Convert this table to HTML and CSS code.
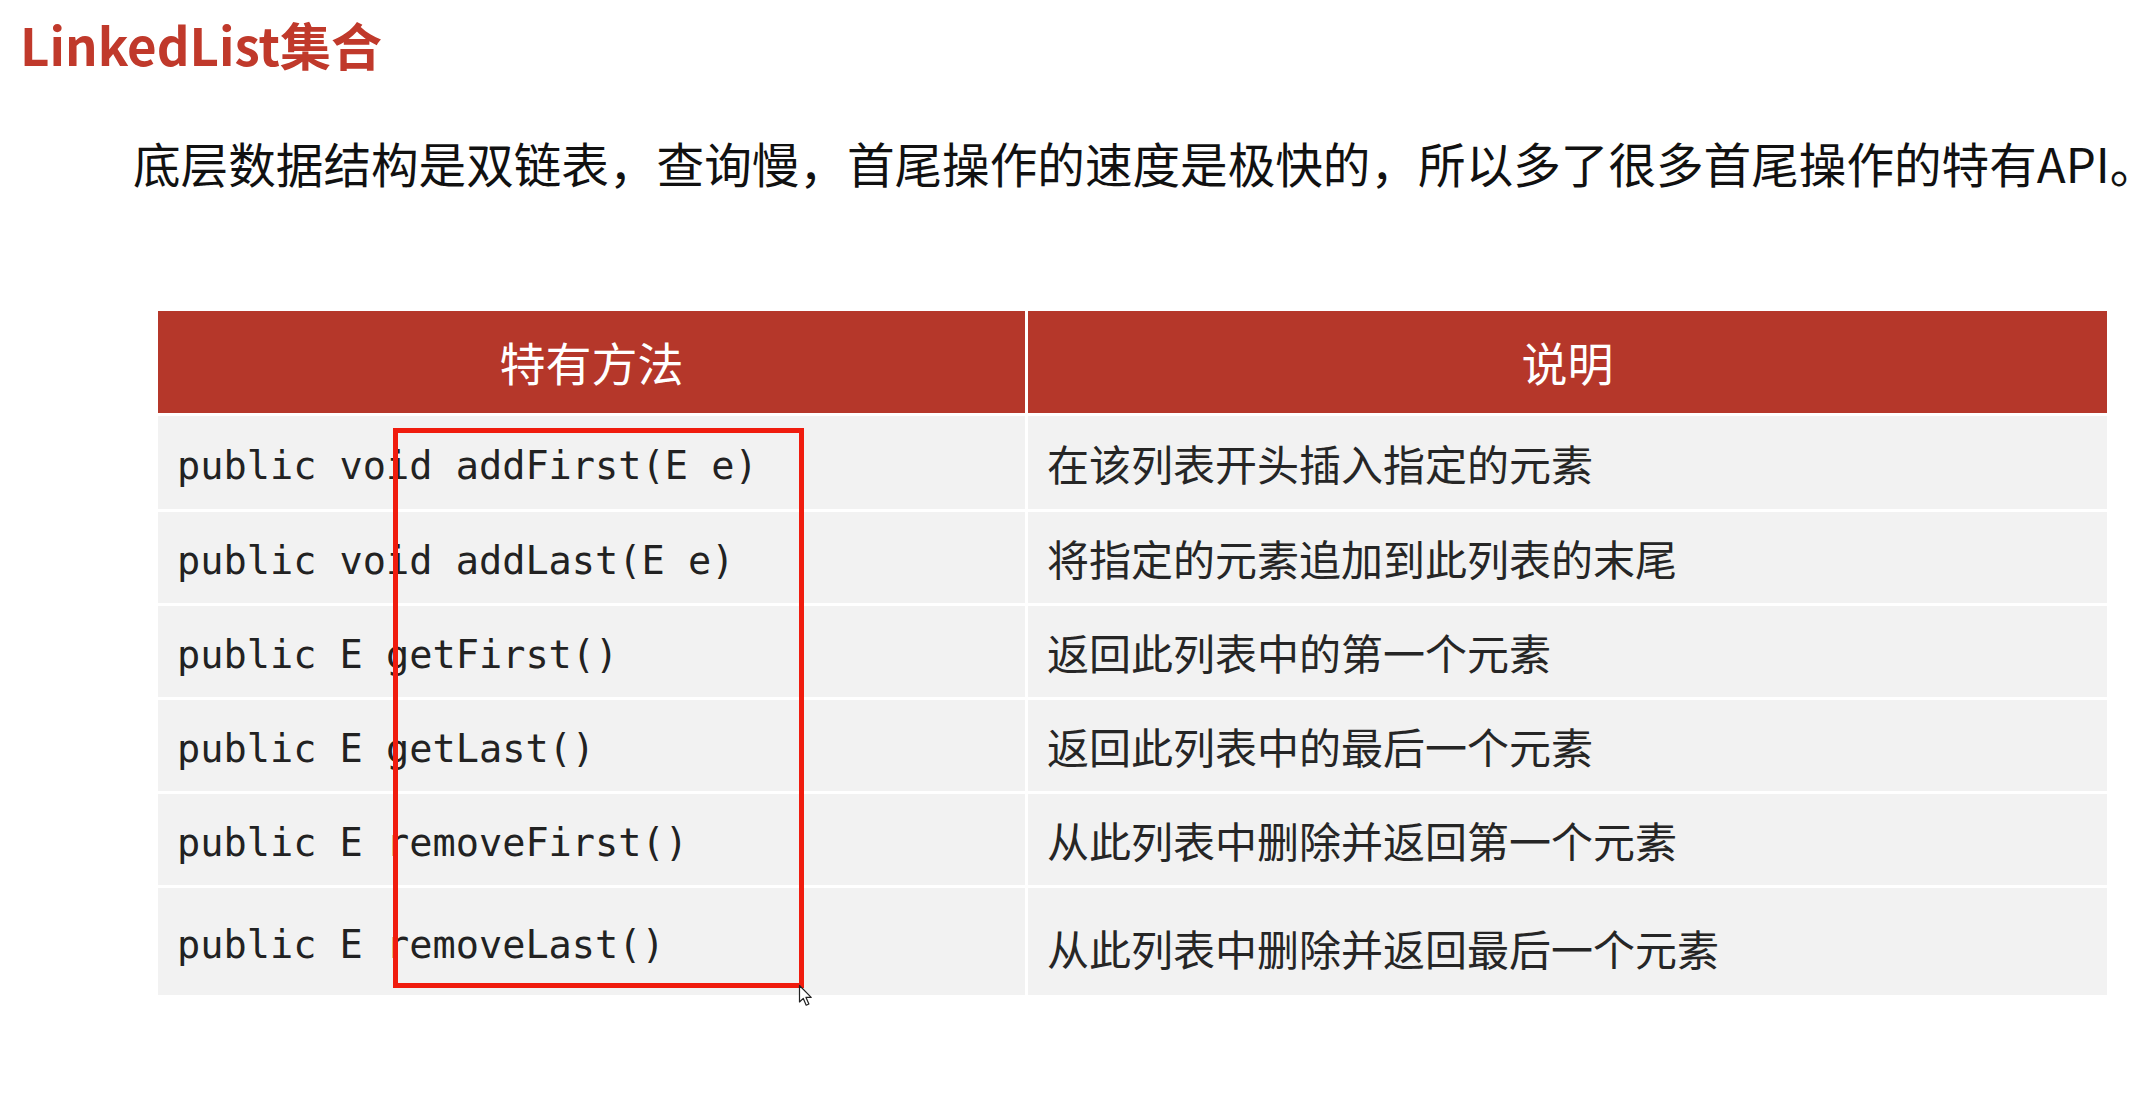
FILE: index.html
```html
<!DOCTYPE html>
<html lang="zh-CN">
<head>
<meta charset="utf-8">
<title>LinkedList集合</title>
<link rel="stylesheet" href="styles.css">
</head>
<body>
<h1 class="title">LinkedList集合</h1>
<p class="intro">底层数据结构是双链表，查询慢，首尾操作的速度是极快的，所以多了很多首尾操作的特有API。</p>
<div class="table">
  <div class="head">特有方法</div>
  <div class="head">说明</div>
  <div class="cell code">public void addFirst(E e)</div>
  <div class="cell desc">在该列表开头插入指定的元素</div>
  <div class="cell code">public void addLast(E e)</div>
  <div class="cell desc">将指定的元素追加到此列表的末尾</div>
  <div class="cell code">public E getFirst()</div>
  <div class="cell desc">返回此列表中的第一个元素</div>
  <div class="cell code">public E getLast()</div>
  <div class="cell desc">返回此列表中的最后一个元素</div>
  <div class="cell code">public E removeFirst()</div>
  <div class="cell desc">从此列表中删除并返回第一个元素</div>
  <div class="cell code">public E removeLast()</div>
  <div class="cell desc last">从此列表中删除并返回最后一个元素</div>
</div>
<div class="highlight"></div>
<svg class="cursor" width="16" height="24" viewBox="0 0 16 24">
  <path d="M1.5 1.5 L1.5 18 L5.3 14.4 L8.2 21.2 L10.9 20 L8 13.4 L13.2 13.4 Z" fill="#fff" stroke="#222" stroke-width="1.2" stroke-linejoin="round"/>
</svg>
</body>
</html>
```
FILE: styles.css
```css
html, body {
  margin: 0;
  padding: 0;
  background: #ffffff;
}
body {
  position: relative;
  width: 2155px;
  height: 1098px;
  overflow: hidden;
  font-family: "Noto Sans CJK SC", "Noto Sans", sans-serif;
}
.title {
  margin: 9px 0 0 20px;
  font-size: 51px;
  line-height: 70px;
  height: 70px;
  font-weight: 700;
  color: #c0392b;
}
.intro {
  margin: 54px 0 0 133px;
  font-size: 47.6px;
  line-height: 60px;
  height: 60px;
  color: #111111;
  white-space: nowrap;
}
.table {
  margin: 118px 0 0 158px;
  width: 1949px;
  display: grid;
  grid-template-columns: 867px 1079px;
  grid-template-rows: 102px 93px 91px 91px 91px 91px 107px;
  column-gap: 3px;
  row-gap: 3px;
}
.head {
  background: #b5372a;
  color: #ffffff;
  font-size: 46px;
  display: flex;
  align-items: center;
  justify-content: center;
  padding-bottom: 2px;
}
.cell {
  background: #f2f2f2;
  display: flex;
  align-items: center;
  color: #262626;
  white-space: nowrap;
}
.code {
  font-family: "DejaVu Sans Mono", "Liberation Mono", monospace;
  font-size: 38.6px;
  padding-left: 19px;
  padding-top: 5px;
  color: #222222;
}
.desc {
  font-size: 42px;
  padding-left: 19px;
}
.desc.last {
  padding-top: 12px;
}
.highlight {
  position: absolute;
  left: 393px;
  top: 428px;
  width: 411px;
  height: 560px;
  box-sizing: border-box;
  border: 5px solid #f01c0e;
}
.cursor {
  position: absolute;
  left: 798px;
  top: 984px;
}
```
